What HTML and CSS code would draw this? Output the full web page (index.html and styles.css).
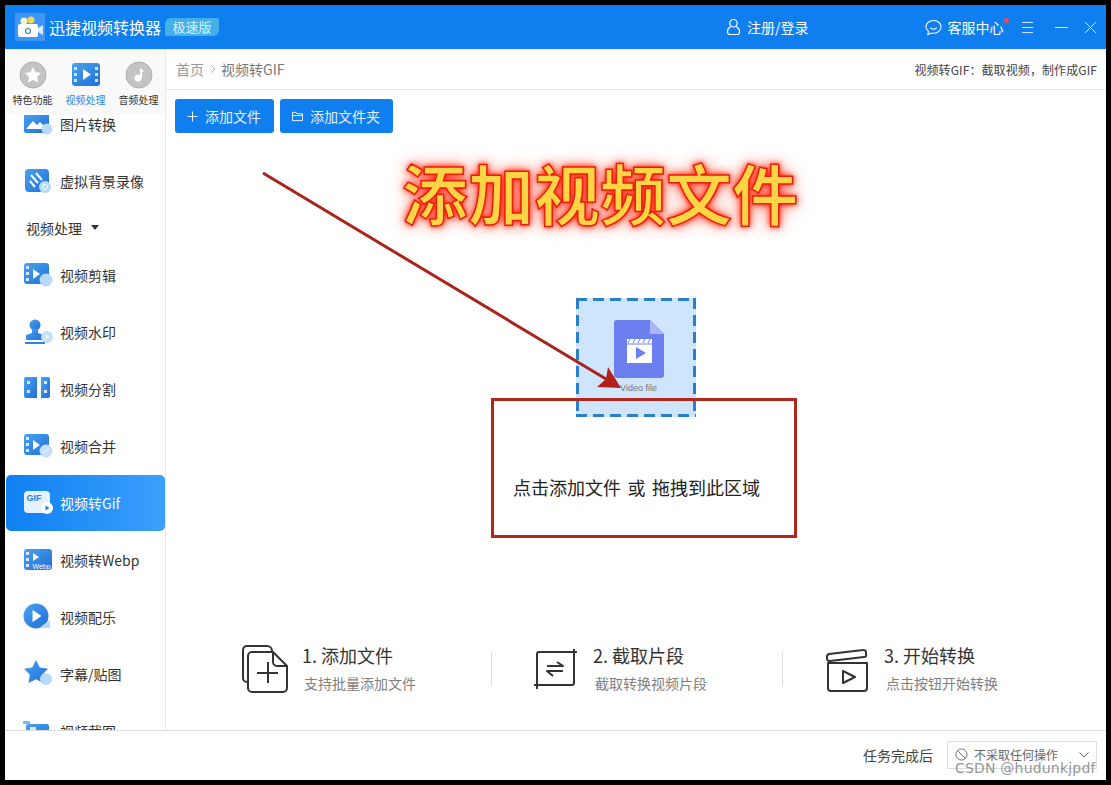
FILE: index.html
```html
<!DOCTYPE html>
<html>

<head>
    <meta charset="utf-8">
    <link rel="stylesheet" href="styles.css">
</head>

<body>
    <svg class="defs">
        <defs>
            <linearGradient id="blue" x1="0" y1="0" x2="1" y2="1">
                <stop offset="0" stop-color="#4aa3f0" />
                <stop offset="1" stop-color="#1f6fd6" />
            </linearGradient>
        </defs>
    </svg>
    <div class="app">
        <div class="topbar">
            <svg class="logo" viewBox="0 0 30 28">
                <rect width="30" height="28" fill="#3f97f3" />
                <rect x="3" y="11" width="20" height="13" rx="2" fill="#fff" />
                <path d="M23 15l5-3v10l-5-3z" fill="#d8ecff" />
                <circle cx="9" cy="8" r="3.5" fill="#f5f2d0" />
                <circle cx="16" cy="7" r="3.5" fill="#f3d65c" />
                <circle cx="13" cy="18" r="2.5" fill="none" stroke="#4a7fb5" stroke-width="1.2" />
            </svg>
            <span class="app_name">迅捷视频转换器</span>
            <span class="badge">极速版</span>
            <div class="login">
                <svg class="ico_user" viewBox="0 0 16 18">
                    <circle cx="8" cy="5" r="4" />
                    <path d="M5 8.500C2.500 10 1.500 12 1.500 14c0 2 1.500 3 3 3h7c1.500 0 3-1 3-3 0-2-1-4-3.500-5.500" />
                </svg>
                <span>注册/登录</span>
            </div>
            <div class="service">
                <svg class="ico_chat" viewBox="0 0 18 18">
                    <path d="M9 1.500c4.400 0 8 2.900 8 6.800s-3.600 6.800-8 6.800c-.8 0-1.500-.1-2.200-.3L3 16.500l.6-3.500C2 11.800 1 10.100 1 8.300 1 4.400 4.600 1.500 9 1.500z" />
                    <path d="M5.500 9.500c1.800 1.800 5.200 1.800 7 0" />
                </svg>
                <span class="service_text">客服中心<i class="dot"></i></span>
            </div>
            <div class="win_btns">
                <svg viewBox="0 0 14 14">
                    <path d="M1 1.500h12M1 7h12M1 12.500h12" />
                </svg>
                <svg class="win_min" viewBox="0 0 14 14">
                    <path d="M0 7h14" />
                </svg>
                <svg class="win_close" viewBox="0 0 14 14">
                    <path d="M1 1l12 12M13 1L1 13" />
                </svg>
            </div>
        </div>

        <div class="middle">
            <div class="side">
                <div class="tabs">
                    <div class="tab">
                        <svg viewBox="0 0 28 28">
                            <circle cx="14" cy="14" r="13" fill="#c4c4c4" />
                            <circle cx="14" cy="14" r="13" fill="none" stroke="#b0b0b0" />
                            <path d="M14 6l2.500 5.200 5.500.8-4 4 1 5.500-5-2.700-5 2.700 1-5.500-4-4 5.500-.8z" fill="#fff" />
                        </svg>
                        <span>特色功能</span>
                    </div>
                    <div class="tab tab_on">
                        <svg viewBox="0 0 28 28">
                            <rect y="2" width="28" height="23" rx="3" fill="url(#blue)" />
                            <path d="M2 6h3v3H2zM2 12h3v3H2zM2 18h3v3H2zM23 6h3v3h-3zM23 12h3v3h-3zM23 18h3v3h-3z" fill="#cfe6fb" />
                            <path d="M11 8l8 5.500-8 5.500z" fill="#fff" />
                        </svg>
                        <span>视频处理</span>
                    </div>
                    <div class="tab">
                        <svg viewBox="0 0 28 28">
                            <circle cx="14" cy="14" r="13" fill="#c4c4c4" />
                            <circle cx="14" cy="14" r="13" fill="none" stroke="#b0b0b0" />
                            <circle cx="13" cy="17" r="3.500" fill="#fff" />
                            <path d="M15 17V7l4 3-2 1v6z" fill="#fff" />
                        </svg>
                        <span>音频处理</span>
                    </div>
                </div>
                <div class="menu">
                    <div class="menu_list">
                        <div class="item">
                            <svg viewBox="0 0 30 30">
                                <rect x="1" y="4" width="25" height="20" rx="2" fill="url(#blue)" />
                                <path d="M3 20l7-8 4 4 3-3 7 7z" fill="#fff" />
                                <circle cx="24" cy="20" r="5.500" fill="#b9d9f8" />
                            </svg>
                            <span>图片转换</span>
                        </div>
                        <div class="item">
                            <svg viewBox="0 0 30 30">
                                <rect x="2" y="3" width="24" height="23" rx="4" fill="url(#blue)" />
                                <path d="M8 9l7 8M13 7l6 7M7 15l5 6" stroke="#fff" stroke-width="2" />
                                <circle cx="22" cy="21" r="6" fill="#b9d9f8" />
                                <circle cx="22" cy="21" r="2.500" fill="none" stroke="#fff" />
                            </svg>
                            <span>虚拟背景录像</span>
                        </div>
                        <div class="group">视频处理<i class="caret"></i></div>
                        <div class="item">
                            <svg viewBox="0 0 30 30">
                                <rect x="1" y="3" width="25" height="21" rx="3" fill="url(#blue)" />
                                <path d="M3 6h3v3H3zM3 12h3v3H3zM3 18h3v3H3z" fill="#d6eafc" />
                                <path d="M10 9l7 5-7 5z" fill="#fff" />
                                <circle cx="23" cy="20" r="6.500" fill="#b9d9f8" />
                            </svg>
                            <span>视频剪辑</span>
                        </div>
                        <div class="item">
                            <svg viewBox="0 0 30 30">
                                <circle cx="12" cy="8" r="5.500" fill="url(#blue)" />
                                <path d="M9 12h6v4l6 2v5H3v-5l6-2z" fill="url(#blue)" />
                                <path d="M2 26h20" stroke="#2f86e0" stroke-width="2" />
                                <circle cx="24" cy="20" r="6" fill="#c3dff9" />
                                <path d="M22.500 17.500l4 2.500-4 2.500z" fill="#fff" />
                            </svg>
                            <span>视频水印</span>
                        </div>
                        <div class="item">
                            <svg viewBox="0 0 30 30">
                                <path d="M3 3h11v21H3a2 2 0 0 1-2-2V5a2 2 0 0 1 2-2z" fill="url(#blue)" />
                                <path d="M18 3h7a2 2 0 0 1 2 2v17a2 2 0 0 1-2 2h-7z" fill="url(#blue)" />
                                <path d="M4 7h3v3H4zM4 16h3v3H4zM21 7h3v3h-3zM21 16h3v3h-3z" fill="#d6eafc" />
                            </svg>
                            <span>视频分割</span>
                        </div>
                        <div class="item">
                            <svg viewBox="0 0 30 30">
                                <rect x="1" y="3" width="25" height="21" rx="3" fill="url(#blue)" />
                                <path d="M3 6h3v3H3zM3 12h3v3H3zM3 18h3v3H3z" fill="#d6eafc" />
                                <path d="M10 9l7 5-7 5z" fill="#fff" />
                                <circle cx="23" cy="20" r="6.500" fill="#c3dff9" />
                                <path d="M20 22l6-5" stroke="#fff" />
                            </svg>
                            <span>视频合并</span>
                        </div>
                        <div class="item item_on">
                            <svg viewBox="0 0 30 30">
                                <rect x="1" y="3" width="26" height="22" rx="4" fill="#e3f0fd" />
                                <text x="3.500" y="13" class="gif_text">GIF</text>
                                <circle cx="24" cy="20" r="6" fill="#fff" />
                                <path d="M22.500 17.500l4 2.500-4 2.500z" fill="#1f7fe8" />
                            </svg>
                            <span>视频转Gif</span>
                        </div>
                        <div class="item">
                            <svg viewBox="0 0 30 30">
                                <rect x="1" y="4" width="28" height="21" rx="3" fill="url(#blue)" />
                                <path d="M3 7h3v3H3zM3 13h3v3H3zM3 19h3v3H3z" fill="#d6eafc" />
                                <path d="M10 8l6 4-6 4z" fill="#fff" />
                                <text x="9.500" y="23.500" class="webp_text">Webp</text>
                            </svg>
                            <span>视频转Webp</span>
                        </div>
                        <div class="item">
                            <svg viewBox="0 0 30 30">
                                <circle cx="13" cy="14" r="12.500" fill="url(#blue)" />
                                <path d="M9.500 8l9 6-9 6z" fill="#fff" />
                                <path d="M16 26l11-8v8z" fill="#b9d9f8" />
                            </svg>
                            <span>视频配乐</span>
                        </div>
                        <div class="item">
                            <svg viewBox="0 0 30 30">
                                <path d="M13 1l3.800 7.500 8.200 1.300-5.800 6 1.300 8.200-7.500-3.800L5.500 24l1.300-8.200L1 9.800l8.200-1.300z" fill="url(#blue)" />
                                <circle cx="23" cy="20" r="6" fill="#b9d9f8" />
                            </svg>
                            <span>字幕/贴图</span>
                        </div>
                        <div class="item">
                            <svg viewBox="0 0 30 30">
                                <rect x="3" y="8" width="23" height="18" rx="2" fill="url(#blue)" />
                                <path d="M0 5h7v3H0z" fill="#7fb9f2" />
                                <rect x="7" y="11" width="6" height="4" fill="#d6eafc" />
                            </svg>
                            <span>视频截图</span>
                        </div>
                    </div>
                </div>
            </div>

            <div class="main">
                <div class="crumbs">
                    <span class="crumb_home">首页</span>
                    <svg class="crumb_arrow" viewBox="0 0 6 10">
                        <path d="M1 1l4 4-4 4" />
                    </svg>
                    <span class="crumb_page">视频转GIF</span>
                    <span class="crumb_tip">视频转GIF：截取视频，制作成GIF</span>
                </div>
                <div class="toolbar">
                    <div class="btn">
                        <svg viewBox="0 0 12 12">
                            <path d="M6 .5v11M.5 6h11" />
                        </svg>
                        <span>添加文件</span>
                    </div>
                    <div class="btn">
                        <svg viewBox="0 0 12 12">
                            <path d="M.5 10.500v-9h4l1 1.500h6v7.500zM.5 5h11" />
                        </svg>
                        <span>添加文件夹</span>
                    </div>
                </div>
                <div class="drop">
                    <svg class="file" viewBox="0 0 50 58">
                        <path d="M3 0h33l14 14v41a3 3 0 0 1-3 3H3a3 3 0 0 1-3-3V3a3 3 0 0 1 3-3z" fill="#6b80ee" />
                        <path d="M36 0l14 14H36z" fill="#aab7f5" />
                        <rect x="13" y="19" width="25" height="24" fill="#fff" />
                        <path d="M13 24h25" stroke="#6b80ee" />
                        <path d="M16 19l-2 4M21 19l-2 4M26 19l-2 4M31 19l-2 4M36 19l-2 4" stroke="#6b80ee" />
                        <path d="M22 27l10 6-10 6z" fill="#6b80ee" />
                    </svg>
                    <span class="drop_label">Video file</span>
                </div>
                <div class="steps">
                    <div class="step">
                        <svg viewBox="0 0 46 48">
                            <path d="M6 37H5a4 4 0 0 1-4-4V5a4 4 0 0 1 4-4h20a5 5 0 0 1 5 5" />
                            <path d="M10 7h21l14 14v22a4 4 0 0 1-4 4H10a4 4 0 0 1-4-4V11a4 4 0 0 1 4-4z" />
                            <path d="M31 7v10a4 4 0 0 0 4 4h10M26 17v21M15 28h21" />
                        </svg>
                        <div class="step_text">
                            <p class="step_title">1. 添加文件</p>
                            <p class="step_sub">支持批量添加文件</p>
                        </div>
                    </div>
                    <div class="step">
                        <svg viewBox="0 0 46 48">
                            <path d="M4 44V9a2 2 0 0 1 2-2h38M41 4v34a2 2 0 0 1-2 2H1" />
                            <path d="M14 21h16l-6-4M30 26H14l6 5" />
                        </svg>
                        <div class="step_text">
                            <p class="step_title">2. 截取片段</p>
                            <p class="step_sub">截取转换视频片段</p>
                        </div>
                    </div>
                    <div class="step">
                        <svg viewBox="0 0 46 48">
                            <path d="M4 18h39v25a3 3 0 0 1-3 3H7a3 3 0 0 1-3-3z" />
                            <path d="M3 12a3 3 0 0 1 2-3l34-4a2.500 2.500 0 0 1 3 2v2a2 2 0 0 1-2 3L6 16a2.500 2.500 0 0 1-3-2z" />
                            <path d="M19 26l12 6-12 6z" />
                        </svg>
                        <div class="step_text">
                            <p class="step_title">3. 开始转换</p>
                            <p class="step_sub">点击按钮开始转换</p>
                        </div>
                    </div>
                </div>
            </div>
        </div>

        <div class="footer">
            <span class="footer_label">任务完成后</span>
            <div class="select">
                <svg class="ico_ban" viewBox="0 0 14 14">
                    <circle cx="7" cy="7" r="6" />
                    <path d="M3 3l8 8" />
                </svg>
                <span>不采取任何操作</span>
                <svg class="ico_chev" viewBox="0 0 10 6">
                    <path d="M.5.5L5 5 9.500.5" />
                </svg>
            </div>
        </div>
    </div>

    <!-- annotations drawn over the screenshot -->
    <svg class="arrow" viewBox="0 0 1111 785">
        <path d="M263 173L606 379" stroke="#a8241c" stroke-width="3" fill="none" />
        <path d="M621 388L597 387 606 379 608 367z" fill="#b3201a" />
    </svg>
    <h1 class="shout">添加视频文件</h1>
    <div class="redbox">点击添加文件 或 拖拽到此区域</div>
    <span class="mark">CSDN @hudunkjpdf</span>
</body>

</html>
```

FILE: styles.css
```css
* {
    box-sizing: border-box;
}

body {
    margin: 0;
    padding: 5px;
    width: 1111px;
    height: 785px;
    overflow: hidden;
    position: relative;
    background-color: black;
    font-family: "Noto Sans CJK SC", "Noto Sans", sans-serif;
    color: #333;
}

p {
    margin: 0;
}

.defs {
    position: absolute;
    width: 0;
    height: 0;
}

.app {
    width: 1101px;
    height: 775px;
    background-color: white;
    display: flex;
    flex-direction: column;
}

.topbar {
    height: 44px;
    flex-shrink: 0;
    background-color: #0f7ff0;
    color: white;
    display: flex;
    align-items: center;
    padding-left: 10px;
}

.logo {
    width: 30px;
    height: 28px;
}

.app_name {
    font-size: 16px;
    margin-left: 4px;
}

.badge {
    margin-left: 4px;
    width: 54px;
    height: 18px;
    line-height: 18px;
    font-size: 13px;
    text-align: center;
    color: #d8f0ff;
    background-color: #45b0e8;
    border-radius: 6px 2px 6px 2px;
}

.login {
    margin-left: 507px;
    display: flex;
    align-items: center;
    font-size: 14px;
}

.ico_user {
    width: 15px;
    height: 18px;
    margin-right: 6px;
    fill: none;
    stroke: white;
    stroke-width: 1.3;
}

.service {
    margin-left: 116px;
    display: flex;
    align-items: center;
    font-size: 14px;
}

.ico_chat {
    width: 17px;
    height: 17px;
    margin-right: 6px;
    fill: none;
    stroke: white;
    stroke-width: 1.1;
}

.service_text {
    position: relative;
}

.dot {
    position: absolute;
    right: -5px;
    top: 1px;
    width: 5px;
    height: 5px;
    border-radius: 50%;
    background-color: #f0445a;
}

.win_btns {
    margin-left: 17px;
    display: flex;
}

.win_btns svg {
    width: 13px;
    height: 13px;
    fill: none;
    stroke: white;
    stroke-width: 1;
    opacity: 0.9;
}

.win_min {
    margin-left: 21px;
}

.win_close {
    margin-left: 16px;
}

.middle {
    flex: 1;
    display: flex;
    min-height: 0;
}

.side {
    width: 161px;
    flex-shrink: 0;
    padding-left: 1px;
    border-right: 1px solid #e8e8e8;
    display: flex;
    flex-direction: column;
}

.tabs {
    height: 66px;
    flex-shrink: 0;
    display: flex;
    background-color: #f9f9f9;
    padding-top: 12px;
}

.tab {
    flex: 1;
    display: flex;
    flex-direction: column;
    align-items: center;
    font-size: 10px;
    line-height: 14px;
    color: #333;
}

.tab svg {
    width: 28px;
    height: 28px;
    margin-bottom: 4px;
}

.tab_on {
    color: #2f86e0;
}

.menu {
    flex: 1;
    overflow: hidden;
    min-height: 0;
}

.menu_list {
    margin-top: -20px;
}

.item {
    height: 57px;
    display: flex;
    align-items: center;
    padding-left: 17px;
    font-size: 14px;
    color: #333;
}

.item svg {
    width: 30px;
    height: 30px;
    margin-right: 7px;
}

.item_on {
    color: white;
    height: 56px;
    margin-top: 1px;
    border-radius: 5px;
    background: linear-gradient(90deg, #0f7ff2, #3aa0fb);
}

.gif_text {
    font-family: "Liberation Sans", sans-serif;
    font-weight: bold;
    font-size: 9px;
    fill: #1f7fe8;
}

.webp_text {
    font-family: "Liberation Sans", sans-serif;
    font-size: 7px;
    fill: white;
}

.group {
    height: 37px;
    padding-left: 20px;
    display: flex;
    align-items: center;
    font-size: 14px;
    color: #333;
}

.caret {
    margin-left: 9px;
    border-top: 5px solid #333;
    border-left: 4px solid transparent;
    border-right: 4px solid transparent;
}

.main {
    flex: 1;
    min-width: 0;
    display: flex;
    flex-direction: column;
}

.crumbs {
    height: 41px;
    flex-shrink: 0;
    border-bottom: 1px solid #e6e6e6;
    padding: 0 9px 0 10px;
    display: flex;
    align-items: center;
    font-size: 14px;
    color: #999;
}

.crumb_arrow {
    width: 6px;
    height: 10px;
    margin: 0 5px 0 6px;
    fill: none;
    stroke: #bbb;
}

.crumb_page {
    color: #777;
}

.crumb_tip {
    margin-left: auto;
    font-size: 12px;
    letter-spacing: 0.1px;
    color: #444;
}

.toolbar {
    display: flex;
    gap: 6px;
    padding: 9px 0 0 9px;
    flex-shrink: 0;
}

.btn {
    height: 34px;
    padding: 0 13px 0 12px;
    display: flex;
    align-items: center;
    gap: 7px;
    border-radius: 3px;
    background-color: #0f7ff0;
    color: #e6f2ff;
    font-size: 14px;
}

.btn svg {
    width: 11px;
    height: 11px;
    fill: none;
    stroke: white;
    stroke-width: 1;
}

.drop {
    width: 120px;
    height: 119px;
    margin: 165px auto 0;
    flex-shrink: 0;
    background:
        linear-gradient(90deg, #2a7fc9 11px, transparent 11px) 0 0 / 17px 3px repeat-x,
        linear-gradient(90deg, #2a7fc9 11px, transparent 11px) 0 100% / 17px 3px repeat-x,
        linear-gradient(#2a7fc9 11px, transparent 11px) 0 0 / 3px 17px repeat-y,
        linear-gradient(#2a7fc9 11px, transparent 11px) 100% 0 / 3px 17px repeat-y,
        #cfe4fd;
    display: flex;
    flex-direction: column;
    align-items: center;
    padding-top: 22px;
}

.file {
    width: 50px;
    height: 58px;
    margin-left: 6px;
}

.drop_label {
    font-family: "Liberation Sans", sans-serif;
    font-size: 9px;
    line-height: 20px;
    margin-left: 5px;
    color: #777;
}

.steps {
    margin: 228px 0 0 34px;
    display: flex;
    flex-shrink: 0;
}

.step {
    width: 291px;
    height: 48px;
    padding-left: 42px;
    display: flex;
    position: relative;
}

.step:not(:last-child)::after {
    content: "";
    position: absolute;
    right: -1px;
    top: 7px;
    height: 34px;
    border-right: 1px solid #ddd;
}

.step svg {
    width: 46px;
    height: 48px;
    flex-shrink: 0;
    fill: none;
    stroke: #333;
    stroke-width: 2;
    stroke-linejoin: round;
}

.step_text {
    margin-left: 14px;
}

.step_title {
    font-size: 18px;
    line-height: 20px;
    color: #333;
}

.step_sub {
    margin: 9px 0 0 2px;
    font-size: 14px;
    line-height: 18px;
    color: #808080;
}

.footer {
    height: 50px;
    flex-shrink: 0;
    border-top: 1px solid #ddd;
    display: flex;
    align-items: center;
    justify-content: flex-end;
    padding: 0 9px 2px 0;
}

.footer_label {
    font-size: 14px;
    color: #444;
    margin-right: 14px;
}

.select {
    width: 150px;
    height: 28px;
    border: 1px solid #ddd;
    display: flex;
    align-items: center;
    padding: 0 7px;
    font-size: 12px;
    color: #666;
}

.ico_ban {
    width: 13px;
    height: 13px;
    margin-right: 6px;
    fill: none;
    stroke: #666;
}

.ico_chev {
    width: 10px;
    height: 6px;
    margin-left: auto;
    fill: none;
    stroke: #666;
}

.arrow {
    position: absolute;
    left: 0;
    top: 0;
    width: 1111px;
    height: 785px;
}

.shout {
    position: absolute;
    left: 402px;
    top: 146px;
    margin: 0;
    font-size: 66px;
    line-height: 90px;
    font-weight: bold;
    font-family: "Noto Sans CJK SC", serif;
    white-space: nowrap;
    color: #ffd445;
    -webkit-text-stroke: 1.5px #e8200c;
    text-shadow: 0 0 5px #ff1a00, 0 0 10px #ff3a20, 0 0 18px #ff8070;
}

.redbox {
    position: absolute;
    left: 491px;
    top: 398px;
    width: 306px;
    height: 140px;
    border: 3px solid #b3261e;
    padding: 73px 0 0 19px;
    font-size: 18px;
    line-height: 26px;
    word-spacing: 2.5px;
    color: #222;
    white-space: nowrap;
}

.mark {
    position: absolute;
    left: 955px;
    top: 759px;
    font-family: "DejaVu Sans", sans-serif;
    font-size: 14px;
    line-height: 18px;
    letter-spacing: 0.2px;
    color: rgba(120, 120, 120, 0.8);
    white-space: nowrap;
}
```
